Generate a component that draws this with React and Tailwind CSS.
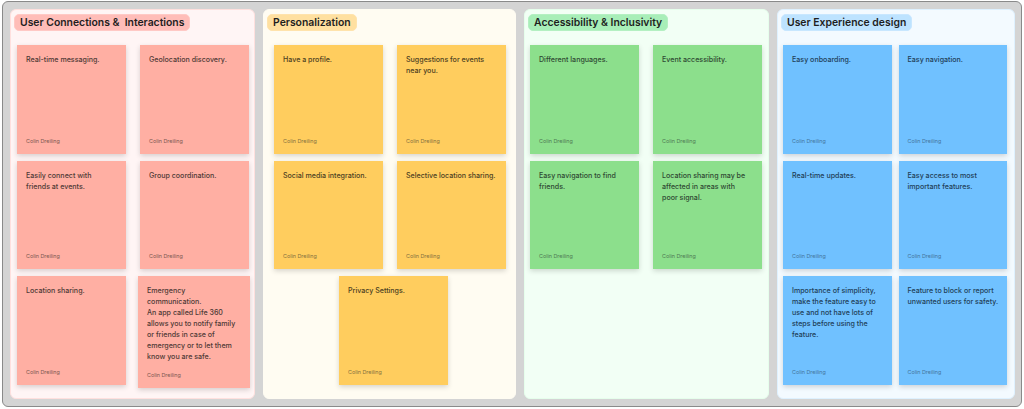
const author = 'Colin Dreiling';

const columns = [
  {
    title: 'User Connections &\u00a0 Interactions',
    panel: 'w-[245px] bg-[#fff5f5] border-[#ffe0de]',
    label: 'bg-[#ffbdb8] border-[#ffc9c5]',
    note: 'bg-[#ffafa3]',
    grid: 'pl-[6px] gap-x-[14.5px]',
    byline: 'text-[#7c5750]',
    text: 'text-[#4f3a36]',
    notes: [
      { lines: ['Real-time messaging.'] },
      { lines: ['Geolocation discovery.'] },
      { lines: ['Easily connect with friends at events.'] },
      { lines: ['Group coordination.'] },
      { lines: ['Location sharing.'] },
      {
        lines: ['Emergency communication.', 'An app called Life 360 allows you to notify family or friends in case of emergency or to let them know you are safe.'],
        size: 'w-[112px] h-[112px] -ml-[2px] -mr-[2px] -mb-[4px]',
      },
    ],
  },
  {
    title: 'Personalization',
    panel: 'w-[253px] bg-[#fffcf2] border-[#fffcf2]',
    label: 'bg-[#ffe0a0] border-[#ffe3ac]',
    note: 'bg-[#ffcd5e]',
    grid: 'pl-[10px] gap-x-[14.5px]',
    byline: 'text-[#85703f]',
    text: 'text-[#4d4122]',
    notes: [
      { lines: ['Have a profile.'] },
      { lines: ['Suggestions for events near you.'] },
      { lines: ['Social media integration.'] },
      { lines: ['Selective location sharing.'] },
      { lines: ['Privacy Settings.'], size: 'w-[108.5px] h-[108.5px] ml-[65px]' },
    ],
  },
  {
    title: 'Accessibility & Inclusivity',
    panel: 'w-[245px] bg-[#f2fff5] border-[#e6ffec]',
    label: 'bg-[#a8eeb8] border-[#b4f0c2]',
    note: 'bg-[#8cdf8c]',
    grid: 'pl-[5px] gap-x-[14.5px]',
    byline: 'text-[#4f7a53]',
    text: 'text-[#2f4a33]',
    notes: [
      { lines: ['Different languages.'] },
      { lines: ['Event accessibility.'] },
      { lines: ['Easy navigation to find friends.'] },
      { lines: ['Location sharing may be affected in areas with poor\u00a0signal.'] },
    ],
  },
  {
    title: 'User Experience design',
    panel: 'w-[238px] bg-[#f3faff] border-[#def1ff]',
    label: 'bg-[#bde3ff] border-[#c8e7ff]',
    note: 'bg-[#70c1ff]',
    grid: 'pl-[5px] gap-x-[7px]',
    byline: 'text-[#44759c]',
    text: 'text-[#1f3f58]',
    notes: [
      { lines: ['Easy onboarding.'] },
      { lines: ['Easy navigation.'] },
      { lines: ['Real-time updates.'] },
      { lines: ['Easy access to most important features.'] },
      { lines: ['Importance of simplicity, make the feature easy to use and not have lots of steps before using the feature.'] },
      { lines: ['Feature to block or report unwanted users for safety.'], size: 'w-[108.5px] h-[108.5px] pr-[5px]' },
    ],
  },
];

const Note = ({ item, col }) => (
  <div className={`p-[9px] flex flex-col justify-between shadow-[0_2px_5px_rgba(0,0,0,0.16)] ${item.size || 'w-[108.5px] h-[108.5px]'} ${col.note}`}>
    <div className={`text-[7.1px] leading-[11px] font-medium ${col.text}`}>
      {item.lines.map((line) => (
        <p key={line}>{line}</p>
      ))}
    </div>
    <p className={`text-[5.4px] leading-[8px] ${col.byline}`}>{author}</p>
  </div>
);

export default function App() {
  return (
    <div className="w-[1024px] h-[409px] bg-white font-['Inter',sans-serif] overflow-hidden">
      <div className="w-[1020px] h-[406px] ml-[2px] mt-[1px] flex gap-2 pl-[7px] pt-[7px] bg-[#d4d4d4] border border-[#8a8a8a] rounded-[6px]">
        {columns.map((col) => (
          <section key={col.title} className={`h-[390px] border rounded-[6px] ${col.panel}`}>
            <h2 className={`w-fit mt-[4px] ml-[3px] h-[17px] px-[5px] flex items-center text-[10.4px] font-semibold text-[#1e1e1e] whitespace-nowrap border rounded-[5px] ${col.label}`}>
              {col.title}
            </h2>
            <div className={`mt-[14px] flex flex-wrap gap-y-[7px] ${col.grid}`}>
              {col.notes.map((item) => (
                <Note key={item.lines[0]} item={item} col={col} />
              ))}
            </div>
          </section>
        ))}
      </div>
    </div>
  );
}
